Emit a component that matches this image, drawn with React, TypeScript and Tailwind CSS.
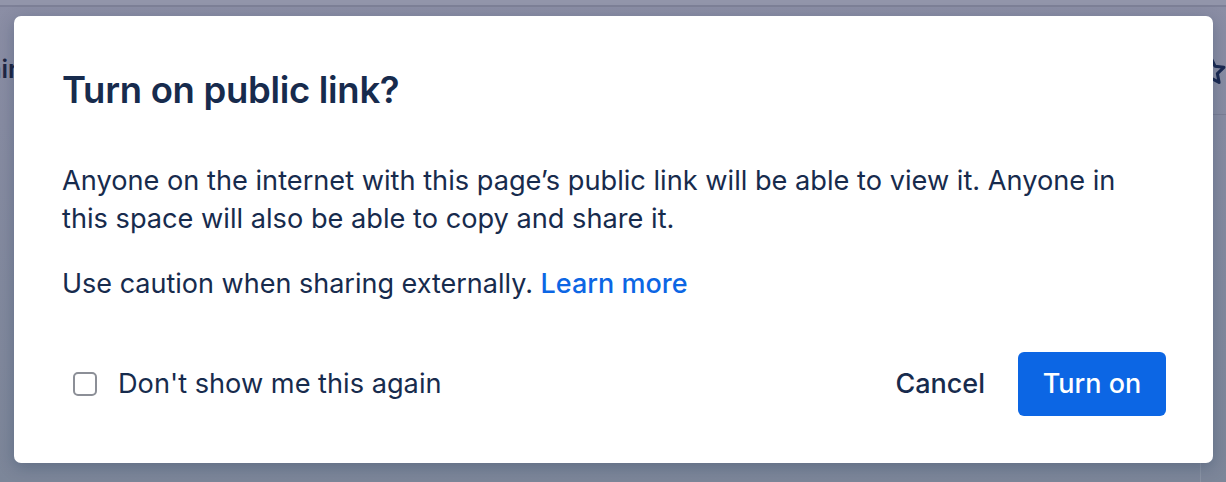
import { useState } from "react";

const ink = "text-[#172b4d]";

function Backdrop() {
  return (
    <div className="absolute inset-0 bg-gradient-to-b from-[#8b8ea5] to-[#7c8699]">
      {/* dimmed page chrome behind the overlay */}
      <div className="h-[5px] bg-[#9295aa]" />
      <div className="h-[2px] bg-[#7d8097]" />
      <div className="absolute left-[-27px] top-[54px] text-[25px] font-semibold leading-[30px] text-[#1e2744]">
        Fair
      </div>
      <svg
        className="absolute left-[1194px] top-[54px]"
        width="34"
        height="34"
        viewBox="0 0 24 24"
        fill="none"
        stroke="#1b2a52"
        strokeWidth="2.2"
        strokeLinejoin="round"
      >
        <path d="M12 2.8l2.8 5.8 6.3.8-4.6 4.4 1.2 6.3L12 17.1l-5.7 3 1.2-6.3-4.6-4.4 6.3-.8z" />
      </svg>
      <div className="absolute left-[1213px] top-[114px] h-px w-[13px] bg-[#7a7e94]" />
      <div className="absolute left-[1200px] top-[440px] h-[42px] w-px bg-[#8a93a4]" />
    </div>
  );
}

function Checkbox({ checked, onChange }: { checked: boolean; onChange: () => void }) {
  return (
    <button
      type="button"
      onClick={onChange}
      className={`flex h-[24px] w-[24px] items-center justify-center rounded-[5px] border-2 ${
        checked ? "border-[#0c66e4] bg-[#0c66e4]" : "border-[#8c8f97] bg-white"
      }`}
    >
      {checked && (
        <svg width="14" height="14" viewBox="0 0 16 16" fill="none" stroke="white" strokeWidth="2.5">
          <path d="M3 8.5l3.2 3L13 4.5" />
        </svg>
      )}
    </button>
  );
}

export default function App() {
  const [hide, setHide] = useState(false);

  return (
    <div className="relative h-[482px] w-[1226px] overflow-hidden font-['Inter',sans-serif]">
      <Backdrop />

      <div className="relative pl-[14px] pt-[16px]">
        <section className="flex h-[447px] w-[1199px] flex-col rounded-[7px] bg-white pb-[47px] pl-[48px] pr-[47px] pt-[48px] shadow-[0_4px_16px_rgba(9,30,66,0.25)]">
          <h1 className={`text-[36.5px] font-semibold leading-[52px] tracking-[-0.3px] ${ink}`}>
            Turn on public link?
          </h1>

          <p className={`mt-[46px] max-w-[1075px] text-[27.2px] leading-[38px] ${ink}`}>
            Anyone on the internet with this page’s public link will be able to view it. Anyone in
            this space will also be able to copy and share it.
          </p>

          <p className={`mt-[27px] text-[27px] leading-[38px] ${ink}`}>
            Use caution when sharing externally.{" "}
            <a href="#" className="font-medium text-[#0c66e4]">
              Learn more
            </a>
          </p>

          <footer className="mt-auto flex items-center justify-between">
            <label className={`flex cursor-pointer items-center gap-[21px] pl-[11px] text-[27.2px] ${ink}`}>
              <Checkbox checked={hide} onChange={() => setHide(!hide)} />
              Don't show me this again
            </label>

            <div className="flex items-center gap-[9px]">
              <button
                type="button"
                className={`h-[64px] rounded-[6px] px-[24px] text-[27px] font-medium ${ink}`}
              >
                Cancel
              </button>
              <button
                type="button"
                className="h-[64px] w-[148px] rounded-[6px] bg-[#0c66e4] text-[27px] font-medium text-white"
              >
                Turn on
              </button>
            </div>
          </footer>
        </section>
      </div>
    </div>
  );
}
